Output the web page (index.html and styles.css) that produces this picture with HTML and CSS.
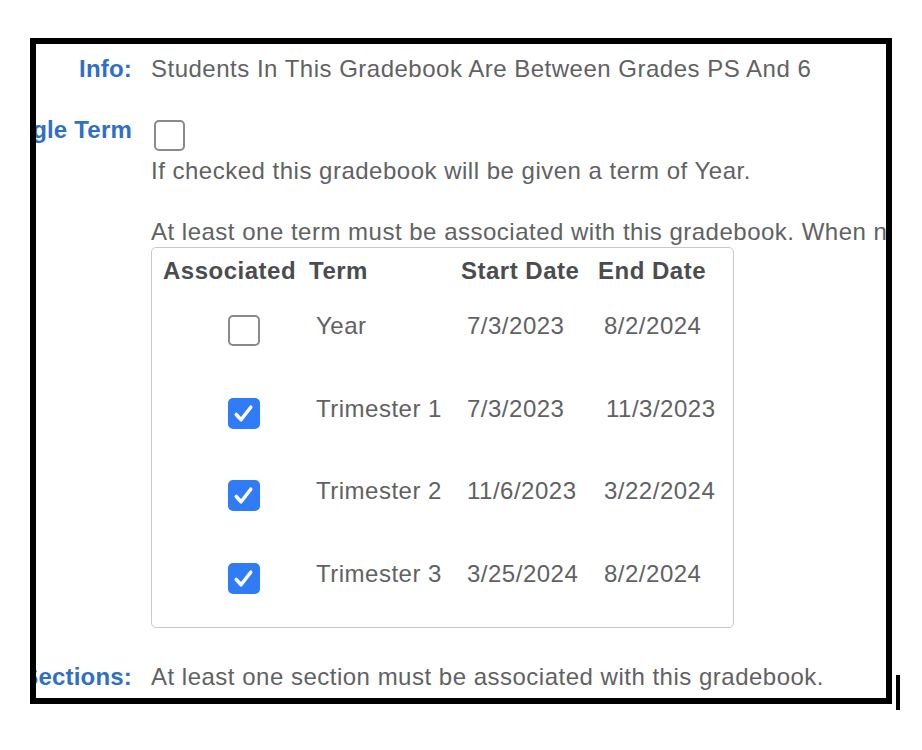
FILE: index.html
```html
<!DOCTYPE html>
<html>
<head>
<meta charset="utf-8">
<link rel="stylesheet" href="styles.css">
</head>
<body>
<div class="page">
  <div class="frame">
    <div class="row row-info">
      <div class="label"><span>Info:</span></div>
      <div class="value"><div class="line">Students In This Gradebook Are Between Grades PS And 6</div></div>
    </div>
    <div class="row row-term">
      <div class="label"><span>Single Term</span></div>
      <div class="value">
        <span class="cb cb-single"></span>
        <div class="line line-ifchecked">If checked this gradebook will be given a term of Year.</div>
        <div class="line line-atleast">At least one term must be associated with this gradebook. When no terms are selected the gradebook will be given a term of Year.</div>
        <div class="terms">
          <div class="grid thead">
            <div class="th">Associated</div>
            <div class="th">Term</div>
            <div class="th">Start Date</div>
            <div class="th">End Date</div>
          </div>
          <div class="grid tbody">
            <div class="td td-cb"><span class="cb"></span></div>
            <div class="td">Year</div>
            <div class="td">7/3/2023</div>
            <div class="td">8/2/2024</div>

            <div class="td td-cb"><span class="cb checked"><svg viewBox="0 0 32 31" width="32" height="31"><path d="M8.5 16.5 L13.5 22 L23.5 9" fill="none" stroke="#fff" stroke-width="3.6" stroke-linecap="round" stroke-linejoin="round"/></svg></span></div>
            <div class="td">Trimester 1</div>
            <div class="td">7/3/2023</div>
            <div class="td td-end2">11/3/2023</div>

            <div class="td td-cb"><span class="cb checked"><svg viewBox="0 0 32 31" width="32" height="31"><path d="M8.5 16.5 L13.5 22 L23.5 9" fill="none" stroke="#fff" stroke-width="3.6" stroke-linecap="round" stroke-linejoin="round"/></svg></span></div>
            <div class="td">Trimester 2</div>
            <div class="td">11/6/2023</div>
            <div class="td">3/22/2024</div>

            <div class="td td-cb"><span class="cb checked"><svg viewBox="0 0 32 31" width="32" height="31"><path d="M8.5 16.5 L13.5 22 L23.5 9" fill="none" stroke="#fff" stroke-width="3.6" stroke-linecap="round" stroke-linejoin="round"/></svg></span></div>
            <div class="td">Trimester 3</div>
            <div class="td">3/25/2024</div>
            <div class="td">8/2/2024</div>
          </div>
        </div>
      </div>
    </div>
    <div class="row row-sections">
      <div class="label"><span>Sections:</span></div>
      <div class="value"><div class="line">At least one section must be associated with this gradebook.</div></div>
    </div>
  </div>
  <div class="cursor"></div>
</div>
</body>
</html>
```
FILE: styles.css
```css
html, body {
  margin: 0;
  padding: 0;
  background: #ffffff;
}
body {
  font-family: "Liberation Sans", Arial, Helvetica, sans-serif;
  font-size: 24px;
  letter-spacing: 0.5px;
  color: #5f6264;
}
.page {
  display: flex;
  align-items: flex-start;
  padding: 38px 0 0 30px;
}
.frame {
  width: 862px;
  height: 666px;
  box-sizing: border-box;
  border: 6px solid #000;
  overflow: hidden;
  padding-top: 11px;
  flex: none;
}
.cursor {
  width: 4px;
  height: 35px;
  background: #000;
  margin-left: 4px;
  margin-top: 637px;
  flex: none;
}
.row {
  display: flex;
  align-items: flex-start;
}
.label {
  width: 96px;
  flex: none;
  display: flex;
  justify-content: flex-end;
  color: #2f6fc6;
  font-weight: bold;
  letter-spacing: 0.2px;
  line-height: 28px;
  white-space: nowrap;
}
.value {
  margin-left: 19px;
  flex: none;
  min-width: 0;
}
.line {
  line-height: 28px;
  white-space: nowrap;
}
.row-term {
  margin-top: 33px;
}
.row-sections {
  margin-top: 35px;
}
.cb {
  display: block;
  box-sizing: border-box;
  width: 31px;
  height: 31px;
  border: 2px solid #8a8a8a;
  border-radius: 5px;
  background: #fff;
}
.cb svg {
  display: block;
  margin: -2px 0 0 -2px;
  width: 31px;
  height: 31px;
}
.cb.checked {
  background: #2f7cf6;
  border-color: #2f7cf6;
}
.cb-single {
  margin: 4px 0 0 3px;
}
.line-ifchecked {
  margin-top: 6px;
}
.line-atleast {
  margin-top: 33px;
}
.terms {
  margin-top: 1px;
  width: 583px;
  box-sizing: border-box;
  border: 1px solid #c9c9c9;
  border-radius: 5px;
  padding: 9px 0 33px 11px;
}
.grid {
  display: grid;
  grid-template-columns: 146px 152px 137px 120px;
}
.th {
  font-weight: bold;
  color: #4a4d50;
  line-height: 28px;
  white-space: nowrap;
}
.tbody {
  margin-top: 27px;
  row-gap: 48.67px;
}
.td {
  line-height: 28px;
  white-space: nowrap;
  padding-left: 6px;
}
.td:nth-child(4n+2) {
  padding-left: 7px;
}
.td-end2 {
  padding-left: 8px;
}
.td-cb {
  padding-left: 65px;
}
.td-cb .cb {
  margin-top: 3px;
  width: 32px;
}
```
